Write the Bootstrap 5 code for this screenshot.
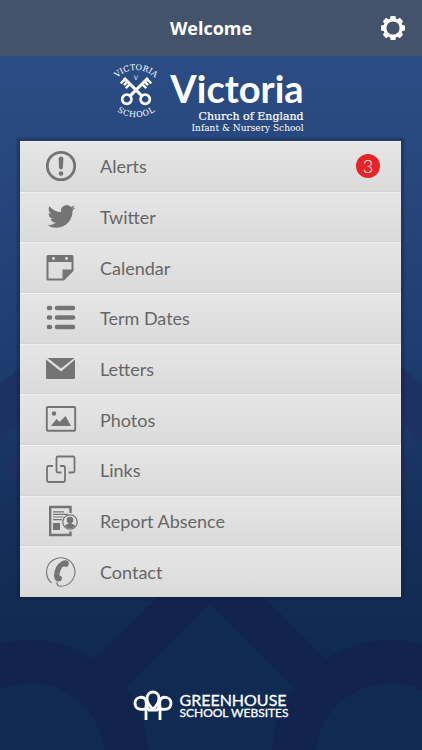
<!DOCTYPE html>
<html lang="en">
<head>
<meta charset="utf-8">
<meta name="viewport" content="width=device-width, initial-scale=1">
<title>Welcome</title>
<link rel="stylesheet" href="https://cdn.jsdelivr.net/npm/bootstrap@5.3.0/dist/css/bootstrap.min.css">
<style>
  body { font-family: Lato, sans-serif; background: linear-gradient(#2b4d85 56px, #26467b 200px, #1d3c6e 370px, #142f59 530px, #112a52 640px) #112a52; }
  .backdrop { z-index: -1; }
  .topbar { height: 56px; background: #42536a; }
  .topbar h1 { font: 700 18px/24px "Open Sans", sans-serif; }
  .gear { right: 16px; }
  .brand { gap: 11px; padding: 6px 5px 7px 0; }
  .brand-name { font-size: 38px; line-height: 44px; font-weight: 700; }
  .slab { font-family: "DejaVu Serif", serif; }
  .slab-lg { font-size: 11px; line-height: 13px; -webkit-text-stroke: .2px #fff; }
  .slab-sm { font-size: 9px; line-height: 11px; }
  .menu { margin: 0 21px 0 20px; min-height: 456px; display: grid; grid-auto-rows: 1fr; box-shadow: 0 0 2px 3px rgba(20, 30, 55, .35); }
  .menu a { color: #666; font-size: 18px; line-height: 24px; padding: 0 21px 0 24px; background: linear-gradient(#e6e6e6, #dadada); border-top: 1px solid #f1f1f1; border-bottom: 1px solid #d4d4d4; }
  .menu svg { width: 34px; height: 34px; margin-right: 22px; fill: #747474; stroke: #747474; flex: none; }
  .count { width: 24px; height: 24px; background: #e52528; font-size: 18px; font-weight: 300; line-height: 24px; }
  .foot { padding: 92px 0 30px; gap: 6px; }
  .foot-lg { font-size: 16px; line-height: 15px; -webkit-text-stroke: .3px #fff; }
  .foot-sm { font-size: 12px; line-height: 12px; -webkit-text-stroke: .3px #fff; }
</style>
<script src="https://cdn.jsdelivr.net/npm/bootstrap@5.3.0/dist/js/bootstrap.bundle.min.js"></script>
</head>
<body class="position-relative min-vh-100 d-flex flex-column">
<svg class="backdrop position-absolute top-0 start-0 w-100 h-100" viewBox="0 0 422 750" preserveAspectRatio="xMidYMax slice" aria-hidden="true">
  <g fill="#1d3163">
    <path d="M0 384L40 350V402L0 442ZM422 384L382 350V402L422 442Z"/>
    <path d="M3 467L30 440V496ZM416 467L390 440V496Z"/>
  </g>
  <path fill="#12234e" d="M157 597L94 658A118 118 0 0 0 -88 757H-45A75 75 0 0 1 105 757H148A118 118 0 0 0 126 687L210 603L294 687A118 118 0 0 0 272 757H315A75 75 0 0 1 465 757H508A118 118 0 0 0 326 658L264 597Z"/>
</svg>

<header class="topbar position-relative d-flex align-items-center justify-content-center text-white">
  <h1 class="m-0">Welcome</h1>
  <button class="gear btn p-0 border-0 position-absolute d-flex" type="button" aria-label="Settings">
    <svg width="26" height="26" viewBox="-13 -13 26 26" fill="#fff">
      <circle r="8.200" fill="none" stroke="#fff" stroke-width="3.200"/>
      <g id="teeth"><path id="tooth" d="M-3 -9L-2.400 -12H2.400L3 -9ZM-3 9L-2.400 12H2.400L3 9Z"/><use href="#tooth" transform="rotate(90)"/></g>
      <use href="#teeth" transform="rotate(45)"/>
    </svg>
  </button>
</header>

<main>
  <div class="brand d-flex justify-content-center text-white">
    <svg width="46" height="60" viewBox="0 0 46 60" fill="#fff" role="img" aria-label="Victoria School crest">
      <defs><path id="arcTop" d="M-4 35A27 27 0 0 1 50 35"/><path id="arcLow" d="M1 43A31 31 0 0 0 45 43"/></defs>
      <g class="slab" font-size="8" text-anchor="middle">
        <text><textPath href="#arcTop" startOffset="50%">VICTORIA</textPath></text>
        <text dy="3"><textPath href="#arcLow" startOffset="50%">SCHOOL</textPath></text>
        <text x="23" y="18" font-size="6">V</text>
      </g>
      <g transform="translate(23 28) rotate(45)" stroke="#fff" fill="none">
        <path stroke-width="3" d="M0 9V-17"/>
        <circle cy="13" r="4.600" stroke-width="2.800"/>
        <path stroke-width="2.400" d="M1 -15.500H6M1 -12H5M1 -8.500H6"/>
      </g>
      <g transform="translate(23 28) rotate(-45)" stroke="#fff" fill="none">
        <path stroke-width="3" d="M0 9V-17"/>
        <circle cy="13" r="4.600" stroke-width="2.800"/>
        <path stroke-width="2.400" d="M-1 -15.500H-6M-1 -12H-5M-1 -8.500H-6"/>
      </g>
    </svg>
    <div class="text-end pt-1">
      <div class="brand-name">Victoria</div>
      <div class="slab slab-lg">Church of England</div>
      <div class="slab slab-sm">Infant &amp; Nursery School</div>
    </div>
  </div>

  <nav class="menu" aria-label="Main">
    <a href="#alerts" class="d-flex align-items-center text-decoration-none">
      <svg viewBox="0 0 34 34"><circle cx="17" cy="17" r="13.700" fill="none" stroke-width="2.800"/><path stroke="none" d="M14.600 9.500Q14.600 7.500 17 7.500T19.400 9.500L18.900 18.500Q18.700 20.500 17 20.500T15.100 18.500Z"/><circle cx="17" cy="24.500" r="2.300" stroke="none"/></svg>
      <span>Alerts</span><span class="count ms-auto rounded-circle text-white text-center">3</span>
    </a>
    <a href="#twitter" class="d-flex align-items-center text-decoration-none">
      <svg viewBox="0 0 34 34"><path stroke="none" transform="translate(3.500 2.500) scale(1.160)" d="M23.950 4.570a10 10 0 0 1-2.820.77 4.960 4.960 0 0 0 2.160-2.720c-.950.550-2 .950-3.120 1.180a4.920 4.920 0 0 0-8.380 4.480C7.690 8.090 4.070 6.130 1.640 3.160a4.920 4.920 0 0 0 1.520 6.570 4.900 4.900 0 0 1-2.230-.61v.06a4.920 4.920 0 0 0 3.950 4.820 5 5 0 0 1-2.210.09 4.940 4.940 0 0 0 4.600 3.420A9.870 9.870 0 0 1 0 19.540a13.990 13.990 0 0 0 7.550 2.210c9.050 0 14-7.500 14-13.980 0-.210 0-.420-.020-.630a9.940 9.940 0 0 0 2.420-2.570z"/></svg>
      <span>Twitter</span>
    </a>
    <a href="#calendar" class="d-flex align-items-center text-decoration-none">
      <svg viewBox="0 0 34 34"><path stroke="none" fill-rule="evenodd" d="M4 4H28Q29.500 4 29.500 5.500V20L20 29.500H4Q2.500 29.500 2.500 28V5.500Q2.500 4 4 4ZM4.500 11V27.500H18.500V18.500H27.500V11Z"/><g fill="#e6e6e6" stroke="none"><circle cx="9.500" cy="7.500" r="1.400"/><circle cx="22.500" cy="7.500" r="1.400"/></g></svg>
      <span>Calendar</span>
    </a>
    <a href="#term-dates" class="d-flex align-items-center text-decoration-none">
      <svg viewBox="0 0 34 34"><path fill="none" stroke-width="4.600" stroke-linecap="round" d="M5 7H6M5 16.500H6M5 26H6M13 7H29M13 16.500H29M13 26H29"/></svg>
      <span>Term Dates</span>
    </a>
    <a href="#letters" class="d-flex align-items-center text-decoration-none">
      <svg viewBox="0 0 34 34"><path stroke="none" d="M3.500 6H30.500L17 16.500ZM2 7.500L17 19.500L31 7.500V25.500Q31 27 29.500 27H3.500Q2 27 2 25.500Z"/></svg>
      <span>Letters</span>
    </a>
    <a href="#photos" class="d-flex align-items-center text-decoration-none">
      <svg viewBox="0 0 34 34"><rect x="2.800" y="4" width="28.400" height="23.800" rx="1" fill="none" stroke-width="1.900"/><circle cx="10" cy="10.500" r="2.200" stroke="none"/><path stroke="none" d="M7 23L12.500 16L15.500 19L21.500 13L27 23Z"/></svg>
      <span>Photos</span>
    </a>
    <a href="#links" class="d-flex align-items-center text-decoration-none">
      <svg viewBox="0 0 34 34"><path fill="none" stroke-width="1.800" d="M9 13H4.500Q3 13 3 14.500V27.500Q3 29 4.500 29H19.500Q21 29 21 27.500V14.500Q21 13 19.500 13H16M24.500 19.500H29Q30.500 19.500 30.500 18V5Q30.500 3.500 29 3.500H14Q12.500 3.500 12.500 5V18Q12.500 19.500 14 19.500H17.500"/></svg>
      <span>Links</span>
    </a>
    <a href="#report-absence" class="d-flex align-items-center text-decoration-none">
      <svg viewBox="0 0 34 34"><path fill="none" stroke-width="2.400" d="M26.500 9V3H6.200V31H26.500V27.500"/><path fill="none" stroke-width="1.200" d="M9 7.800H20M9 10.400H24M9 13H19.500M9 15.600H18"/><path stroke="none" d="M9 19H16V26H9Z"/><circle cx="26" cy="18" r="7.200" fill="none" stroke-width="1.200"/><circle cx="26" cy="16" r="3.300" stroke="none"/><path stroke="none" d="M24.500 18H27.500V19.500L31.500 21.500Q29.500 24.500 26 24.500T20.500 21.500L24.500 19.500Z"/></svg>
      <span>Report Absence</span>
    </a>
    <a href="#contact" class="d-flex align-items-center text-decoration-none">
      <svg viewBox="0 0 34 34"><path fill="none" stroke-width="1.100" d="M7.500 27.800A14.200 14.200 0 1 1 16 31.200Q12.500 30.500 13 27"/><path stroke="none" d="M17.500 6.500Q21 4.500 24 6Q25.500 8 24.500 10.500Q23.500 12.500 20.500 11.500Q18 11 17 14.500Q15 19 15.500 20.500Q18.500 21.500 18 24Q17 26.500 14.500 26.500Q10.500 26.500 10 21Q10 11 17.500 6.500Z"/></svg>
      <span>Contact</span>
    </a>
  </nav>
</main>

<footer class="foot d-flex justify-content-center align-items-center text-white">
  <svg width="40" height="32" viewBox="0 0 40 32" fill="none" stroke="#fff" stroke-width="2.800" aria-hidden="true">
    <path d="M13 31V16M27 31V16"/>
    <path d="M13 20Q2 22 2 14A6 6 0 0 1 13 11M27 20Q38 22 38 14A6 6 0 0 0 27 11"/>
    <path d="M20 20Q14 15 14 9A6 6 0 0 1 26 9Q26 15 20 20ZM13 11Q13 18 16 21H24Q27 18 27 11"/>
  </svg>
  <div>
    <div class="foot-lg">GREENHOUSE</div>
    <div class="foot-sm">SCHOOL WEBSITES</div>
  </div>
</footer>
</body>
</html>
